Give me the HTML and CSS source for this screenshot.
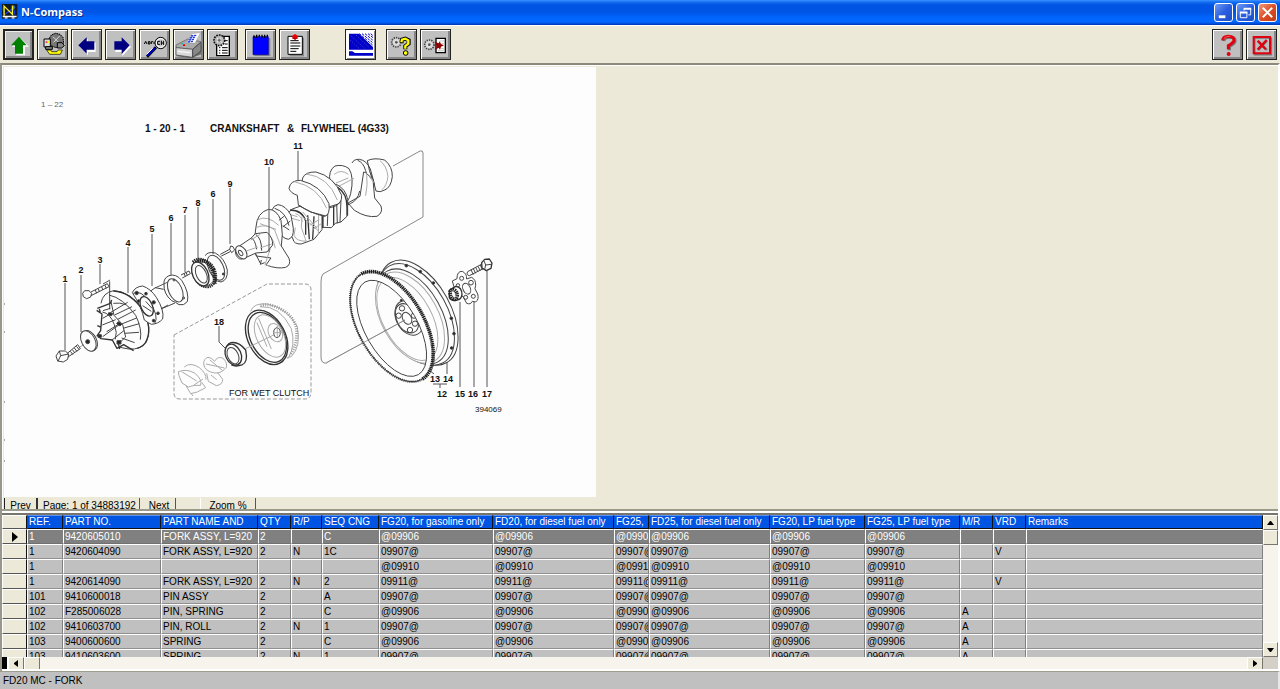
FILE: index.html
```html
<!DOCTYPE html>
<html lang="en">
<head>
<meta charset="utf-8">
<title>N-Compass</title>
<link rel="stylesheet" href="styles.css">
</head>
<body>
<header class="titlebar">
  <svg class="app-icon" viewBox="6 10 46 46" aria-hidden="true"><path fill="#101820" d="M6 10h44v42H6z"/><path fill="none" stroke="#1c3ce0" stroke-width="4" d="M14 40L44 18M42 40V28"/><path fill="none" stroke="#f4ec30" stroke-width="4" d="M12 44V16L36 40V14"/><path fill="none" stroke="#3fc9c0" stroke-width="3" d="M40 14v12M10 20v8"/><path fill="#fff" d="M8 44h40v4H8zM14 49h8v3h-8zM34 49h8v3h-8z"/></svg>
  <h1 class="title">N-Compass</h1>
  <button class="win" aria-label="Minimize"><svg viewBox="0 0 18 18"><path fill="#fff" d="M4 12h7v3H4z"/></svg></button>
  <button class="win" aria-label="Restore"><svg viewBox="0 0 18 18"><g fill="none" stroke="#fff"><path stroke-width="2" d="M7 5h8M3 9h8"/><path d="M7.500 5v2M14.500 5v6.500H12M3.500 9v5.500h7V9"/></g></svg></button>
  <button class="win close" aria-label="Close"><svg viewBox="0 0 18 18"><path fill="none" stroke="#fff" stroke-width="2" d="M4 4l10 10M14 4L4 14"/></svg></button>
</header>

<nav class="toolbar" aria-label="Tools">
  <div class="group">
    <button class="tool focused" aria-label="Up"><svg viewBox="15 90 81 81"><path fill="#fff" d="M61 110l26 27H75v26H49v-26H36z"/><path fill="#008000" d="M57 107l23 26H69v25H45v-25H33z"/></svg></button>
    <button class="tool" aria-label="Open catalog"><svg viewBox="118 90 81 81"><path fill="#777" stroke="#000" stroke-width="3" stroke-dasharray="5 2" d="M149 112l6-10 12-5 14 3 9 9 2 17-7 9-16 5-15-6z"/><path stroke="#ddd" stroke-width="3" d="M160 107l18 18M162 124l18-19"/><path fill="#ddd" stroke="#000" stroke-width="3" d="M133 114h19v24h-19z"/><path fill="#e33" d="M138 121h5v5h-5z"/><path fill="#ff0" d="M145 121h4v5h-4z"/><path fill="#888" stroke="#000" stroke-width="3" d="M138 137h20v8h-20zM173 125h14l7 9-8 7h-13z"/><path fill="#ffff00" stroke="#000" stroke-width="2" d="M141 147l9 13h32l6-13h-12l-4 5h-16l-3-5z"/></svg></button>
    <button class="tool" aria-label="Previous"><svg viewBox="219 90 81 81"><path fill="#fff" d="M239 137l25-24v12h23v28h-23v10z"/><path fill="#000080" d="M235 133l25-24v12h23v25h-23v12z"/></svg></button>
    <button class="tool" aria-label="Next"><svg viewBox="321 90 81 81"><path fill="#fff" d="M393 137l-26-24v12h-21v28h21v12z"/><path fill="#000080" d="M389 133l-24-24v12h-22v25h22v13z"/></svg></button>
    <button class="tool" aria-label="Search"><svg viewBox="423 90 81 81"><path stroke="#000" stroke-width="9" d="M468 139l-27 28"/><path stroke="#0000c0" stroke-width="6" d="M466 141l-25 24"/><path stroke="#fff" stroke-width="3" d="M458 142l-18 18"/><circle cx="482" cy="126" r="17" fill="#ccc" stroke="#000" stroke-width="3"/><circle cx="482" cy="126" r="13" fill="none" stroke="#fff" stroke-width="3"/><path fill="none" stroke="#000" stroke-width="3" d="M433 129l4-8 4 8M445 129v-7h5v7zM454 129v-7h5M462 122v7M480 121h-7v9h7M484 119v13M491 119v13M484 126h7"/></svg></button>
    <button class="tool" aria-label="Print"><svg viewBox="524 90 81 81"><path fill="#707070" d="M545 149l42-20 17 4v27l-35 12-42-7z"/><path fill="#aaa" stroke="#555" stroke-width="2" d="M527 132l35-18 40 8-25 23-50-5z"/><path fill="#d8d8d8" stroke="#444" stroke-width="2" d="M527 140l50 5v24l-50-7z"/><path fill="#888" stroke="#333" stroke-width="2" d="M577 145l25-21v26l-25 19z"/><path fill="#fff" stroke="#888" d="M558 126l18-28 24-3-16 31z"/><path stroke="#2038e0" stroke-width="4" stroke-dasharray="7 2" d="M572 105l17-2M568 111l18-2M565 117l18-2M562 123l18-2"/><path fill="#e00" d="M548 130h6v5h-6z"/><path fill="#16c0a0" d="M542 126h6v4h-6z"/><path stroke="#fff" stroke-width="3" d="M532 151l37 4"/></svg></button>
    <button class="tool" aria-label="Parts list"><svg viewBox="625 90 81 81"><path fill="#fff" stroke="#000" stroke-width="4" d="M648 106h38v58h-38z"/><path stroke="#000" stroke-width="3" d="M668 119h13M672 129h9M655 140h4M664 140h17M655 148h4M664 148h17M655 156h4M664 156h17"/><circle cx="656" cy="118" r="16" fill="#aaa" stroke="#111" stroke-width="5" stroke-dasharray="5 3"/><circle cx="656" cy="118" r="12" fill="#bbb"/><path stroke="#fff" stroke-width="3" d="M649 112l14 12M649 124l13-12"/><circle cx="656" cy="118" r="4" fill="#666"/></svg></button>
  </div>
  <div class="group">
    <button class="tool" aria-label="Notebook"><svg viewBox="49 90 81 81"><path fill="#888" d="M71 111h48v54H71z"/><path fill="#00f" stroke="#0000a0" stroke-width="2" d="M67 107h46v54H67z"/><path stroke="#000" stroke-width="4" d="M70 103v7M78 101v9M86 101v9M94 101v9M102 101v9M110 101v9"/></svg></button>
    <button class="tool" aria-label="Notes"><svg viewBox="148 90 81 81"><path fill="#888" d="M174 110h43v56h-43z"/><path fill="#fff" stroke="#000" stroke-width="3" d="M169 106h43v54h-43z"/><path stroke="#000" stroke-width="3" d="M176 119h25M176 126h30M176 135h30M176 143h25M176 151h18"/><path fill="#e00" d="M182 104l8-5 8 5v8l-8 4-8-4z"/><path stroke="#700" stroke-width="2" d="M182 112h16M190 114v6"/></svg></button>
  </div>
  <div class="group chart">
    <button class="tool" aria-label="Display"><svg viewBox="351 90 81 81"><path fill="#fff" d="M351 90h81v81h-81z"/><path fill="#0000c8" d="M357 98h30l42 40v8h-72zM357 151h10l8 5h54v8h-72z"/><path stroke="#0000c8" stroke-width="3" stroke-dasharray="8 3" d="M388 98l40 34M396 98l32 27M405 98l24 20M414 98l15 12M422 98l7 6"/><path stroke="#e8e8ff" stroke-width="1" stroke-dasharray="3 5" d="M362 104l43 39M378 102l40 38M360 117l28 26"/></svg></button>
  </div>
  <div class="group">
    <button class="tool" aria-label="Part help"><svg viewBox="474 90 81 81"><circle cx="499" cy="124" r="14" fill="#ccc" stroke="#444" stroke-width="5" stroke-dasharray="4 3"/><circle cx="499" cy="124" r="10" fill="#ddd"/><circle cx="499" cy="124" r="4" fill="#555"/><path fill="none" stroke="#000" stroke-width="12" d="M514 126l2-10 10-3 10 5v10l-10 7v10"/><path fill="none" stroke="#ff0" stroke-width="7" d="M514 124l2-8 10-3 9 5v10l-9 7v8"/><circle cx="527" cy="156" r="7" fill="#ff0" stroke="#000" stroke-width="3"/></svg></button>
    <button class="tool" aria-label="Exit parts"><svg viewBox="576 90 81 81"><circle cx="598" cy="131" r="14" fill="#ccc" stroke="#444" stroke-width="5" stroke-dasharray="4 3"/><circle cx="598" cy="131" r="10" fill="#ddd"/><circle cx="598" cy="131" r="4" fill="#555"/><path fill="#fff" stroke="#000" stroke-width="4" d="M618 112h28v43h-28z"/><path stroke="#aaa" stroke-width="2" d="M630 120h13M634 127h9M632 143h11M624 149h19"/><path fill="#900000" d="M614 122l12 5 3-6 4 8 9 4-9 4-3 9-4-6-10 6 4-11z"/></svg></button>
  </div>
  <div class="group end">
    <button class="tool" aria-label="Help"><svg viewBox="103 90 81 81"><path fill="none" stroke="#777" stroke-width="10" d="M132 120q1-11 17-12 18 1 17 12-2 8-17 16v12"/><path fill="none" stroke="#e00010" stroke-width="9" d="M129 118q1-11 17-12 18 1 17 12-2 8-17 16v11"/><path fill="none" stroke="#ff8080" stroke-width="2" d="M132 113q5-8 20-7"/><circle cx="147" cy="159" r="6" fill="#e00010"/></svg></button>
    <button class="tool" aria-label="Exit"><svg viewBox="205 90 81 81"><path fill="none" stroke="#777" stroke-width="5" d="M225 111h50v50h-50z"/><path fill="none" stroke="#e00010" stroke-width="6" d="M222 108h49v49h-49z"/><path stroke="#777" stroke-width="7" d="M236 121l26 26M262 119l-26 28"/><path stroke="#e00010" stroke-width="7" d="M234 119l24 26M261 117l-27 29"/></svg></button>
  </div>
</nav>

<main class="workspace">
  <section class="viewer" aria-label="Illustration">
    <svg class="drawing" viewBox="4 67 592 430" role="img" aria-label="Crankshaft and flywheel exploded view">
      <g class="tick"><path d="M4 304h1M4 332h1M4 402h1M4 440h1M4 461h1"/></g>
      <g class="leader">
        <path d="M65 283v67M81 275v57M100 264v20M128 247v46M152 234v52M171 223v52M185 215v57M198 207v54M213 199v55M230 188v56M460 302v85M474 300v87M487 271v116M447 362v12M219 326v16l6 6"/>
        <path d="M433 384h14M440 384v4M428 369l6 5"/>
        <path class="frame" d="M393 166l27-15q3-1 3 2v64L323 274q-2 2-2 8v75q0 7 6 6"/>
        <path class="dash" d="M174 335l93-51h38q6 0 6 6v102q0 7-6 7H180q-6 0-6-6z"/>
        <path d="M103 284l7-4M155 288l13-6M155 312l13-7"/>
      </g>
      <!-- hub, spacer and bolts -->
      <g class="part" transform="translate(30 240) scale(.3333)">
        <path d="M78 348l10-15h18l10 9-3 16-13 8-17-3zM112 340l31-26 8 12-37 25M121 334l8 10M127 329l8 10M133 324l8 10M139 319l8 9M88 333l4 14 24-5M92 347l-8 17"/>
        <ellipse cx="180" cy="301" rx="19" ry="32" transform="rotate(-28 180 301)"/><ellipse cx="175" cy="303" rx="20" ry="33" transform="rotate(-28 175 303)"/><circle class="dark" cx="173" cy="305" r="6"/>
        <path class="thin" d="M148 322l14-8M195 290l12-6"/>
        <path d="M158 160l6-8h13l8 8-3 11-12 5-10-6zM183 156l49-25 5 9-54 27M196 150l4 10M205 146l3 9M215 141l4 9M225 136l4 9"/>
        <path d="M239 124v84M213 190q5-32 38-38 50 2 90 60 27 54 8 94-17 24-52 21-15-2-30-6"/>
        <path class="heavy" d="M250 153q52 2 91 61 25 51 9 87-7 18-28 24"/>
        <path d="M237 165q42 9 80 61 20 41 14 73"/>
        <path class="heavy" d="M202 205l39-15 4-10M200 211l16 11-4 50-10 14 11 10 34 4 14 25 20-11 30 18M211 217l-3-10M214 262l-12-5M264 307l5 20"/>
        <path d="M219 212l22-7M218 235l25-14M217 255l40-16M230 275l40-25M218 290l50-36M245 301l38-30M243 185l9 41 26 28 9 37-20 19M241 218l52-31M254 225l52-25M263 238l54-28M275 252l45-18M279 265l49-14M284 280l43-3M275 294l39 14M250 190q20-3 38 4"/>
        <path d="M217 216q24 4 36 38 10 24 3 44"/><path class="dark" d="M204 284h10v8h-10zM261 302h12v10h-12zM236 218l12 2-3 7-10-2zM264 245l12 7-6 6-10-7z"/>
        <path class="fill" d="M307 158q8-18 31-20 24 8 41 34 25 40 19 65-13 15-34 16-9-4-21-13-8-40-36-82z"/>
        <path d="M310 160q22-12 48 25 30 42 16 66"/><ellipse class="heavy" cx="350" cy="199" rx="17" ry="31" transform="rotate(-24 350 199)"/>
        <g class="dark"><circle cx="320" cy="159" r="5"/><circle cx="348" cy="161" r="4"/><circle cx="371" cy="187" r="5"/><circle cx="384" cy="220" r="4"/><circle cx="371" cy="242" r="4"/><circle cx="326" cy="183" r="4"/></g>
        <path d="M338 197l26 17M347 184l20 22M362 153l14-10 25 5M393 207l42-18"/>
        <path d="M402 132q-2-17 15-25 21-7 38 14 24 38 17 64-10 13-25 9-10-8-22-12-25-21-23-50z"/><ellipse cx="436" cy="151" rx="20" ry="37" transform="rotate(-24 436 151)"/><circle cx="432" cy="120" r="3"/><circle cx="461" cy="174" r="3"/>
        <path d="M453 105l24-12 4 8-24 13M462 100l4 9M468 97l4 9"/>
        <path d="M526 47q6-13 30-8 28 15 36 51 2 31-19 36-12-1-18-9"/><ellipse cx="558" cy="83" rx="22" ry="40" transform="rotate(-25 558 83)"/><circle class="dark" cx="580" cy="102" r="3"/>
        <ellipse class="gear" cx="524" cy="101" rx="30" ry="40" transform="rotate(-25 524 101)"/><path class="gear" d="M489 67q17-16 40-1 25 22 26 66"/><ellipse class="heavy" cx="511" cy="102" rx="23" ry="38" transform="rotate(-25 511 102)"/><ellipse cx="514" cy="103" rx="15" ry="28" transform="rotate(-25 514 103)"/>
        <path d="M571 43l28-15M574 48l27-13M599 28l3-10 7 2 5 10-9 8z"/>
      </g>
      <!-- wet clutch inset -->
      <g class="part" transform="translate(30 240) scale(.3333)">
        <path class="soft" d="M662 214q8-26 50-22 60 12 90 68 12 60-18 90l-14 4"/><path class="soft" d="M690 200q60-4 94 66 14 50-10 90"/><path class="rim" d="M692 197q25-10 64 12 38 22 44 60 3 46-20 76"/>
        <ellipse class="heavy" cx="710" cy="292" rx="56" ry="87" transform="rotate(-27 710 292)"/><ellipse class="heavy" cx="712" cy="292" rx="50" ry="80" transform="rotate(-27 712 292)"/><ellipse class="soft" cx="720" cy="288" rx="40" ry="68" transform="rotate(-27 720 288)"/><ellipse class="soft" cx="736" cy="278" rx="20" ry="29" transform="rotate(-27 736 278)"/><ellipse cx="741" cy="278" rx="10" ry="15"/><path class="soft" d="M681 248l30 72M686 235l38 92M742 257v36M729 278h30"/>
        <path class="soft" d="M735 283l-88 43"/>
        <path class="heavy" d="M586 335q2-22 17-27 24-4 44 22 8 37-11 45-18 6-32 0"/><ellipse class="heavy" cx="610" cy="344" rx="23" ry="33" transform="rotate(-24 610 344)"/><ellipse cx="609" cy="347" rx="16" ry="26" transform="rotate(-24 609 347)"/>
        <g class="soft"><path d="M445 395q25-10 50 5 22 18 17 36-20-2-37 5l-19-12-9-22zM463 381q18-16 45 2 22 17 20 36M468 437l14 24 20-5 25-13-12-16M521 372q0-16 13-20 12 1 20 12 7-14 22-11 15 9 14 28-15 20-36 18-31-5-33-27zM530 400l5 24 24 13q20-3 19-19l-15-20M484 461l5 7M528 372l55 12M540 360l38 32M455 395l45 28M492 435l27-18M543 405l17 14"/></g>
      </g>
      <!-- crankshaft -->
      <g class="part" transform="translate(220 130) scale(.3333)">
        <path d="M450 96q-6 20 8 52 8 20 14 36"/><path class="fill" d="M442 92q20-10 52-2 24 20 23 50-4 34-25 41-11 7-24 2l-8-31q-14-30-18-60z"/><path class="soft" d="M480 92q20 15 24 47-3 28-18 40"/><path d="M396 99q6-12 22-11 22 3 33 29l12 44-6 21M413 91q17 6 24 31l10 34"/>
        <path class="fill" d="M437 128l22 20 5 56 19 24q7 20-12 31-32 5-68-18l-19-22 36-20 11-73z"/><path class="soft" d="M440 130q4 34-3 67M449 142l14 17"/>
        <path class="fill" d="M347 160l-14-3q-6-36 15-49 24-6 42 8 16 25 5 75-6 26-24 33l-14-40z" transform="translate(-3 0)"/><path class="soft" d="M343 133q20-17 42 0M348 159l37-15M354 170l48-25"/>
        <path d="M391 221q-24 14-20-6M391 221q22-9 28-38"/>
        <path class="fill" d="M306 232l43-69q29 14 34 46v48l-20 19-17 4-12 13-25-1z"/><path class="heavy" d="M310 224l-2 70M341 222v63M353 172q28 17 28 60v25"/><path d="M363 211l-3 65M324 236l-2 52M350 216l2 64"/>
        <path class="fill" d="M248 144q8-19 40-18 54 13 77 70 1 26-20 29l-25 8-75-70z"/><path class="soft" d="M258 132q67 7 94 78"/><path d="M322 235q29-5 38-18"/>
        <path class="fill" d="M187 266l30-29 23-8q36 3 66 20v50l-24 29-38 14q-23 1-25-15z"/><path class="heavy" d="M210 240q37 0 47 33v41M263 256l5 72M282 259l-4 68"/><path class="soft" d="M246 259l-2 33 15 43M226 251q17 4 21 24M296 249l-1 65M223 317q5 17 38 17M205 252l27 8M209 263l31 9M248 246l43 49M252 265l45 39M226 293l-4 24M268 286l30-17M276 300l28-19"/>
        <path class="fill" d="M207 175q4-24 34-24 63 15 86 70 4 34-13 38-45-10-79-35l-3-28q-20-6-25-21z"/><path class="soft" d="M223 155q71 15 97 80"/><path d="M235 226l37 20 45 12"/>
        <path class="fill" d="M157 239q3-12 17-15 23 2 39 32l7 39q2 28-15 33-11-2-18-9z"/><path d="M164 235q33 10 43 52M211 273l-23 18M208 300l-20-13"/>
        <path class="fill" d="M108 291q3-43 37-53 25 0 38 33l4 43-3 34 23 37q7 20-10 27-24 6-59-7l15-21-44-6-9-26z"/><path class="soft" d="M114 269q28-15 62 17M110 292q30-12 54 8l18 48M140 313q20 8 26 42M120 281l48 17M151 356l-16 48 15 4"/><path d="M106 370l15 30M177 271l15-12M124 390l-3 13 13-5"/>
        <path class="fill" d="M46 366q-1-13 14-19l34-23 12-13 35-4q18 16 17 38l-17 21-33 3-38 17q-13 5-21-9z"/><ellipse cx="64" cy="367" rx="14" ry="22" transform="rotate(-35 64 367)"/><ellipse cx="62" cy="369" rx="5" ry="9" transform="rotate(-35 62 369)"/><path d="M94 324q11 4 16 34M107 313q18 12 18 49"/><path class="soft" d="M92 330l29-17M79 363l35-12M120 354l35-12"/>
      </g>
      <path class="leader" d="M269 167v85M298 151v29"/>
      <!-- flywheel and ring gear -->
      <g class="part" transform="translate(310 230) scale(.3333)">
        <ellipse cx="326" cy="248" rx="96" ry="172" transform="rotate(-29 326 248)"/><ellipse cx="319" cy="253" rx="93" ry="166" transform="rotate(-29 319 253)"/><ellipse cx="307" cy="260" rx="88" ry="156" transform="rotate(-29 307 260)"/><ellipse class="soft" cx="300" cy="263" rx="85" ry="149" transform="rotate(-29 300 263)"/><ellipse class="soft" cx="292" cy="267" rx="73" ry="136" transform="rotate(-29 292 267)"/><ellipse cx="297" cy="264" rx="38" ry="55" transform="rotate(-28 297 264)"/><ellipse cx="291" cy="265" rx="31" ry="47" transform="rotate(-28 291 265)"/><ellipse cx="291" cy="265" rx="13" ry="19" transform="rotate(-28 291 265)"/>
        <g><circle cx="276" cy="235" r="8"/><circle cx="266" cy="257" r="8"/><circle cx="312" cy="257" r="8"/><circle cx="315" cy="281" r="8"/><circle cx="300" cy="300" r="8"/></g>
        <g class="dark"><circle cx="289" cy="107" r="4"/><circle cx="331" cy="125" r="4"/><circle cx="370" cy="159" r="4"/><circle cx="424" cy="265" r="4"/><circle cx="432" cy="311" r="4"/><circle cx="425" cy="354" r="4"/><circle cx="274" cy="211" r="3"/></g>
        <path class="thin" d="M285 270L50 398"/>
        <path class="ring" fill-rule="evenodd" d="M154 132A98 182 -30 0 1 336 448A98 182 -30 0 1 154 132zM165 156A78 160 -30 0 0 325 434A78 160 -30 0 0 165 156z"/>
        <path class="gear" d="M154 132A98 182 -30 0 1 336 448"/><path class="teeth" d="M336 448A98 182 -30 0 1 154 132"/>
        <path class="thin" d="M285 270L50 398"/>
        <path class="fill" d="M427 153l14-7q0-23 16-22 14 7 13 23l15-5q13 7 12 24l-2 10 8 16q5 16-6 24l-10-2q-5 11-17 6l-11-21-13-1-12-21z"/><ellipse cx="470" cy="176" rx="11" ry="17" transform="rotate(-25 470 176)"/><circle cx="455" cy="145" r="6"/><circle cx="483" cy="158" r="7"/><circle cx="490" cy="199" r="6"/><circle cx="467" cy="202" r="6"/><circle cx="444" cy="166" r="5"/>
        <path class="heavy fill" d="M418 181l19-12q19 2 19 25-2 15-15 16-16 5-23-7z"/><ellipse class="gear" cx="431" cy="193" rx="10" ry="15" transform="rotate(-20 431 193)"/>
        <path d="M473 125l43-23 8 12-46 23q-10-2-5-12zM483 119l7 15M490 116l7 14M497 112l7 14M504 109l7 13M511 105l6 14"/><path class="fill heavy" d="M515 98l9-10 14-1 8 12-3 16-14 7-13-8z"/><path d="M522 92l5 13 17-2M527 105l-3 14"/>
      </g>
      <g class="num">
        <text x="65" y="282">1</text><text x="81" y="273">2</text><text x="100" y="263">3</text><text x="128" y="246">4</text><text x="152" y="232">5</text><text x="171" y="221">6</text><text x="185" y="213">7</text><text x="198" y="206">8</text><text x="213" y="197">6</text><text x="230" y="187">9</text><text x="269" y="165">10</text><text x="298" y="149">11</text><text x="219" y="325">18</text><text x="435" y="382">13</text><text x="448" y="382">14</text><text x="442" y="397">12</text><text x="460" y="397">15</text><text x="473" y="397">16</text><text x="487" y="397">17</text>
      </g>
      <text class="page-no" x="41" y="107">1 – 22</text>
      <text class="heading" x="145" y="132">1 - 20 - 1</text>
      <text class="heading" x="210" y="132">CRANKSHAFT</text><text class="heading" x="287" y="132">&amp;</text><text class="heading" x="301" y="132">FLYWHEEL (4G33)</text>
      <text class="inset" x="229" y="396">FOR WET CLUTCH</text>
      <text class="plate" x="475" y="412">394069</text>
    </svg>
    <div class="pager">
      <button class="page-btn prev">Prev</button>
      <span class="page-info">Page: 1 of 34883192</span>
      <button class="page-btn next">Next</button>
      <button class="page-btn zoom">Zoom %</button>
    </div>
  </section>

  <section class="grid" aria-label="Parts">
    <div class="rows">
      <table class="parts">
        <colgroup><col class="c-mark"><col class="c-ref"><col class="c-part"><col class="c-name"><col class="c-qty"><col class="c-rp"><col class="c-seq"><col class="c-fg20"><col class="c-fd20"><col class="c-fg25"><col class="c-fd20"><col class="c-lp"><col class="c-lp"><col class="c-mr"><col class="c-mr"><col></colgroup>
        <thead><tr><th class="mark"></th><th>REF.</th><th>PART NO.</th><th>PART NAME AND</th><th>QTY</th><th>R/P</th><th>SEQ CNG</th><th>FG20, for gasoline only</th><th>FD20, for diesel fuel only</th><th>FG25,</th><th>FD25, for diesel fuel only</th><th>FG20, LP fuel type</th><th>FG25, LP fuel type</th><th>M/R</th><th>VRD</th><th>Remarks</th></tr></thead>
        <tbody>
          <tr class="current"><td class="mark"><svg viewBox="0 0 6 10" aria-label="Current row"><path d="M0 0l6 5-6 5z"/></svg></td><td>1</td><td>9420605010</td><td>FORK ASSY, L=920</td><td>2</td><td></td><td>C</td><td>@09906</td><td>@09906</td><td>@09906</td><td>@09906</td><td>@09906</td><td>@09906</td><td></td><td></td><td></td></tr>
          <tr><td class="mark"></td><td>1</td><td>9420604090</td><td>FORK ASSY, L=920</td><td>2</td><td>N</td><td>1C</td><td>09907@</td><td>09907@</td><td>09907@</td><td>09907@</td><td>09907@</td><td>09907@</td><td></td><td>V</td><td></td></tr>
          <tr><td class="mark"></td><td>1</td><td></td><td></td><td></td><td></td><td></td><td>@09910</td><td>@09910</td><td>@09910</td><td>@09910</td><td>@09910</td><td>@09910</td><td></td><td></td><td></td></tr>
          <tr><td class="mark"></td><td>1</td><td>9420614090</td><td>FORK ASSY, L=920</td><td>2</td><td>N</td><td>2</td><td>09911@</td><td>09911@</td><td>09911@</td><td>09911@</td><td>09911@</td><td>09911@</td><td></td><td>V</td><td></td></tr>
          <tr><td class="mark"></td><td>101</td><td>9410600018</td><td>PIN ASSY</td><td>2</td><td></td><td>A</td><td>09907@</td><td>09907@</td><td>09907@</td><td>09907@</td><td>09907@</td><td>09907@</td><td></td><td></td><td></td></tr>
          <tr><td class="mark"></td><td>102</td><td>F285006028</td><td>PIN, SPRING</td><td>2</td><td></td><td>C</td><td>@09906</td><td>@09906</td><td>@09906</td><td>@09906</td><td>@09906</td><td>@09906</td><td>A</td><td></td><td></td></tr>
          <tr><td class="mark"></td><td>102</td><td>9410603700</td><td>PIN, ROLL</td><td>2</td><td>N</td><td>1</td><td>09907@</td><td>09907@</td><td>09907@</td><td>09907@</td><td>09907@</td><td>09907@</td><td>A</td><td></td><td></td></tr>
          <tr><td class="mark"></td><td>103</td><td>9400600600</td><td>SPRING</td><td>2</td><td></td><td>C</td><td>@09906</td><td>@09906</td><td>@09906</td><td>@09906</td><td>@09906</td><td>@09906</td><td>A</td><td></td><td></td></tr>
          <tr><td class="mark"></td><td>103</td><td>9410603600</td><td>SPRING</td><td>2</td><td>N</td><td>1</td><td>09907@</td><td>09907@</td><td>09907@</td><td>09907@</td><td>09907@</td><td>09907@</td><td>A</td><td></td><td></td></tr>
        </tbody>
      </table>
    </div>
    <div class="vscroll">
      <button class="sb" aria-label="Scroll up"><svg viewBox="0 0 7 4"><path d="M0 4h7L4 0H3z"/></svg></button>
      <div class="thumb"></div>
      <div class="track"></div>
      <button class="sb" aria-label="Scroll down"><svg viewBox="0 0 7 4"><path d="M0 0h7L4 4H3z"/></svg></button>
    </div>
    <div class="hscroll">
      <div class="split"></div>
      <button class="hb" aria-label="Scroll left"><svg viewBox="0 0 4 7"><path d="M4 0v7L0 4V3z"/></svg></button>
      <div class="hthumb"></div>
      <div class="track"></div>
      <button class="hb" aria-label="Scroll right"><svg viewBox="0 0 4 7"><path d="M0 0v7l4-3V3z"/></svg></button>
    </div>
    <div class="corner"></div>
  </section>
</main>
<footer class="status">FD20 MC - FORK</footer>
</body>
</html>
```

FILE: styles.css
```css
* { box-sizing: border-box; }
body {
  margin: 0;
  min-height: 100vh;
  display: flex;
  flex-direction: column;
  background: #ece9d8;
  color: #000;
  font: 10px/13px "Liberation Sans", Arial, sans-serif;
  overflow: hidden;
}
button { font: inherit; color: inherit; padding: 0; margin: 0; border: 0; background: none; }
svg { display: block; }

.titlebar {
  display: flex;
  align-items: center;
  height: 25px;
  padding: 0 3px 0 2px;
  gap: 3px;
  border-bottom: 1px solid #003bc0;
  background: linear-gradient(#3a93ff 0, #1670f0 2px, #0054e3 5px, #0055e5 12px, #0066ff 18px, #0066ff 22px, #0048d0 24px);
}
.app-icon { width: 16px; height: 16px; }
.title {
  flex: 1;
  margin: 0;
  color: #fff;
  font: bold 11px/16px "Open Sans", "Noto Sans", sans-serif;
  text-shadow: 1px 1px #0a2a88;
}
.win {
  width: 19px;
  height: 19px;
  border: 1px solid #fff;
  border-radius: 3px;
  background: linear-gradient(135deg, #6f9cf5, #2a5fe0 50%, #1c4fc4);
}
.win.close { background: linear-gradient(135deg, #f09a80, #dd4f28 50%, #c03c14); }
.win svg { width: 17px; height: 17px; }

.toolbar {
  display: flex;
  align-items: center;
  gap: 7px;
  height: 38px;
  padding: 0 3px;
  border-top: 1px solid #fff;
}
.group { display: flex; gap: 3px; }
.chart { margin: 0 3px 0 28px; }
.end { margin-left: auto; }
.tool {
  width: 31px;
  height: 31px;
  border: 1px solid #222;
  background: #c0c0c0;
  box-shadow: inset 1px 1px #fff, inset -2px -2px #868686;
}
.focused { box-shadow: inset 0 0 0 1px #222, inset 2px 2px #eee, inset -3px -3px #868686; }
.tool svg { width: 27px; height: 27px; margin: 1px; }

.workspace {
  flex: 1;
  display: flex;
  flex-direction: column;
  border-top: 2px solid #8b897c;
  border-left: 2px solid #99978a;
  border-right: 2px solid #fff;
}
.viewer {
  flex: 1;
  display: flex;
  flex-direction: column;
  align-items: flex-start;
  padding: 2px 0 0 2px;
  box-shadow: inset 1px 1px #fff;
}
.drawing { width: 592px; height: 430px; background: #fdfdfd; }
.pager { display: flex; align-items: center; height: 14px; white-space: nowrap; }
.page-btn { height: 13px; padding-top: 2px; line-height: 11px; }
.prev { width: 34px; border-left: 1px solid #222; border-right: 2px solid #333; }
.page-info { width: 102px; padding: 2px 0 0 5px; line-height: 11px; border-right: 1px solid #555; }
.next { width: 36px; padding-left: 3px; border-right: 1px solid #555; }
.zoom { width: 56px; margin-left: 24px; border-left: 1px solid #fff; border-right: 1px solid #555; }

.drawing text { font-family: "Liberation Sans", Arial, sans-serif; fill: #111; }
.part { fill: none; stroke: #444; stroke-width: 3; stroke-linejoin: round; }
.fill, .ring, .part > ellipse { fill: #fdfdfd; }
.part .thin { stroke-width: 2; stroke: #777; }
.part .soft { stroke: #aaa; stroke-width: 3; }
.part .heavy { stroke: #333; stroke-width: 4; }
.part .dark { fill: #222; }
.part .gear { fill: none; stroke: #222; stroke-width: 11; stroke-dasharray: 4 2; }
.part .rim { stroke: #999; stroke-width: 9; stroke-dasharray: 3 4; }
.part .teeth { stroke: #333; stroke-width: 7; stroke-dasharray: 3 3; }
.leader { fill: none; stroke: #555; stroke-width: 1; }
.frame { stroke: #888; }
.dash { stroke: #999; stroke-dasharray: 4 2; }
.tick { stroke: #555; }
.num text { font-size: 9px; text-anchor: middle; font-weight: bold; }
.drawing .page-no { font-size: 8px; fill: #666; }
.heading { font-size: 10px; font-weight: bold; }
.inset { font-size: 9px; }
.plate { font-size: 8px; }

.grid {
  display: grid;
  grid-template: 142px 12px / 1fr 15px;
  margin-top: 1px;
  border-top: 2px solid #77756c;
  border-bottom: 2px solid #fff;
  box-shadow: 0 -2px #fff, 0 -4px #9b998a;
}
.rows { overflow: hidden; background: #c0c0c0; }
.parts { width: 100%; table-layout: fixed; border-collapse: separate; border-spacing: 0; }
.parts th, .parts td {
  height: 15px;
  padding: 0 0 0 1px;
  overflow: hidden;
  white-space: nowrap;
  text-align: left;
  font-weight: normal;
  line-height: 13px;
  border: 1px solid #fff;
  border-right-color: #808080;
  border-bottom-color: #909090;
}
.parts th {
  height: 14px;
  line-height: 12px;
  color: #fff;
  background: #0054e3;
  border-color: #5a93f0 #111 #111 #0054e3;
}
.parts .current td { background: #808080; border-bottom-color: #707070; color: #fff; }
.parts .mark, .parts .current .mark { background: #ece9d8; border-color: #fff #111 #555 #fff; }
.mark svg { width: 6px; height: 10px; margin-left: 8px; }
.c-mark { width: 25px; }
.c-ref { width: 36px; }
.c-part { width: 98px; }
.c-name { width: 97px; }
.c-qty { width: 33px; }
.c-rp { width: 31px; }
.c-seq { width: 57px; }
.c-fg20 { width: 114px; }
.c-fd20 { width: 121px; }
.c-fg25 { width: 35px; }
.c-lp { width: 95px; }
.c-mr { width: 33px; }

.vscroll, .hscroll { display: flex; background: #f6f4ec; }
.vscroll { flex-direction: column; }
.track { flex: 1; }
.sb, .thumb, .hb, .hthumb {
  display: grid;
  place-items: center;
  background: #ece9d8;
  border: 1px solid #fff;
  border-right-color: #77756c;
  border-bottom-color: #77756c;
}
.sb, .thumb { height: 15px; }
.sb svg { width: 7px; height: 4px; }
.hb, .hthumb { width: 16px; border-bottom: 0; }
.hb svg { width: 4px; height: 7px; }
.split { width: 6px; background: #000; border-right: 1px solid #fff; }
.corner { background: #d4d0c8; }

.status {
  height: 18px;
  padding: 1px 3px;
  line-height: 15px;
  background: #c0c0c0;
  border-top: 1px solid #a09d8c;
  border-right: 2px solid #e8e8e8;
}
```
